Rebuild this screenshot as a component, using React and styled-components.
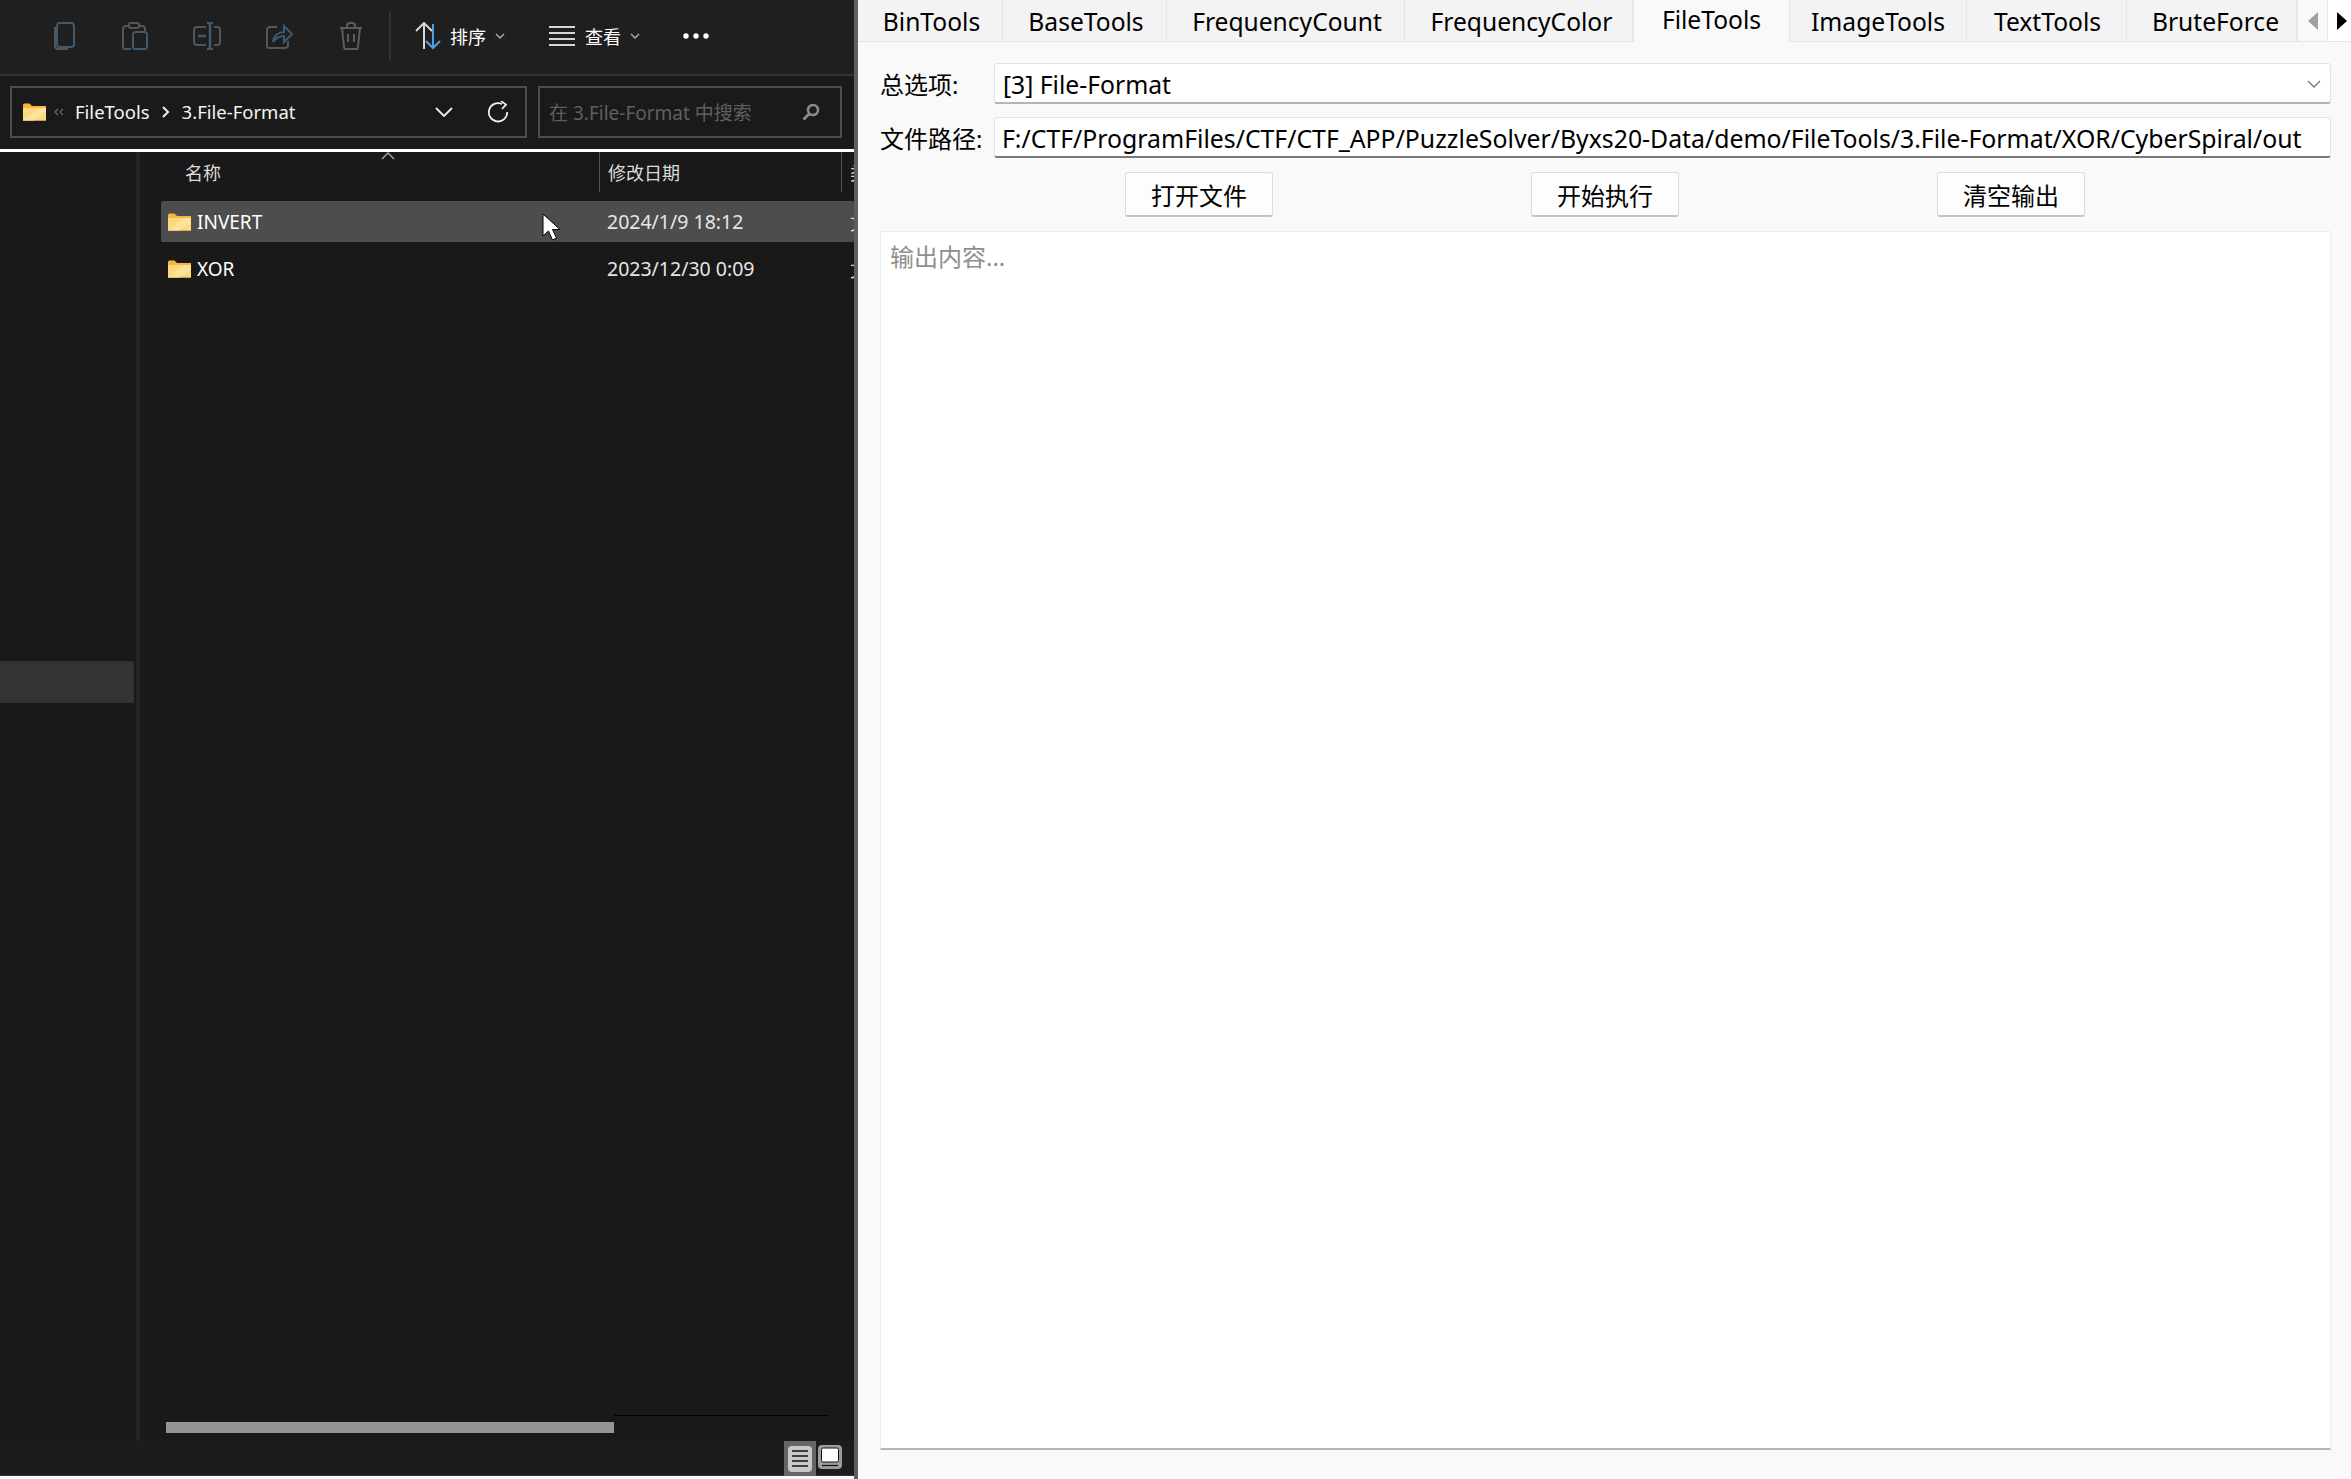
import React from 'react';
import styled, { createGlobalStyle } from 'styled-components';

const GlobalStyle = createGlobalStyle`
  html, body {
    margin: 0;
    padding: 0;
    background: #f9f9f9;
  }
  * {
    box-sizing: border-box;
  }
`;

const FONT = `"Noto Sans", "Noto Sans CJK SC", sans-serif`;

const Screen = styled.div`
  display: flex;
  width: 2351px;
  height: 1479px;
  overflow: hidden;
  font-family: ${FONT};
`;

/* left: file explorer */
const Explorer = styled.section`
  position: relative;
  display: flex;
  flex-direction: column;
  width: 854px;
  height: 1476px;
  background: #191919;
  color: #fff;
`;

const Divider = styled.div`
  width: 4px;
  height: 1479px;
  background: #5f5f5f;
`;

const Toolbar = styled.div`
  display: flex;
  align-items: center;
  height: 76px;
  padding: 0 0 2px 0;
  background: #1f1f1f;
  border-bottom: 2px solid #333;
`;

const ToolIcon = styled.svg`
  width: 28px;
  height: 28px;
  margin-left: ${p => p.$gap}px;
  flex: none;
`;

const ToolSep = styled.div`
  width: 2px;
  height: 48px;
  margin-left: 24px;
  background: #333;
`;

const ToolText = styled.span`
  font-size: 18px;
  margin-left: ${p => p.$gap}px;
  color: #fff;
`;

const AddressRow = styled.div`
  display: flex;
  gap: 11px;
  height: 73px;
  padding: 10px 12px 0 10px;
  background: #1a1a1a;
`;

const AddressBox = styled.div`
  display: flex;
  align-items: center;
  width: 517px;
  height: 52px;
  border: 2px solid #4d4d4d;
  padding-left: 11px;
`;

const SearchBox = styled.div`
  display: flex;
  align-items: center;
  flex: 1;
  height: 52px;
  border: 2px solid #4d4d4d;
  padding-left: 9px;
`;

const Crumb = styled.span`
  font-size: 18.5px;
  margin: -2px 0 0 ${p => p.$gap}px;
  color: #f4f4f4;
`;

const SearchText = styled.span`
  flex: 1;
  font-size: 19px;
  color: #5f5f5f;
`;

const WhiteLine = styled.div`
  height: 3px;
  background: #fff;
`;

const Body = styled.div`
  display: flex;
  flex: 1;
  min-height: 0;
`;

const NavPane = styled.div`
  width: 140px;
  padding-top: 509px;
  border-right: 4px solid #242424;
`;

const NavSelected = styled.div`
  width: 134px;
  height: 42px;
  background: #333;
  border-radius: 0 2px 2px 0;
`;

const FileArea = styled.div`
  position: relative;
  flex: 1;
  display: flex;
  flex-direction: column;
  min-width: 0;
  overflow: hidden;
`;

const HeaderRow = styled.div`
  position: relative;
  display: flex;
  height: 40px;
  margin-bottom: 9px;
  font-size: 18px;
  color: #dcdcdc;
`;

const HeaderCell = styled.div`
  display: flex;
  align-items: center;
  width: ${p => p.$w}px;
  height: 40px;
  padding-left: ${p => p.$pad}px;
  border-right: ${p => (p.$line ? '1px solid #555' : 'none')};
  flex: none;
  white-space: nowrap;
`;

const SortCaret = styled.svg`
  position: absolute;
  left: 241px;
  top: 0;
  width: 14px;
  height: 8px;
`;

const Row = styled.div`
  display: flex;
  align-items: center;
  height: 41px;
  margin: 0 0 6px 21px;
  padding-left: 7px;
  border-radius: 2px;
  background: ${p => (p.$active ? '#4d4d4d' : 'transparent')};
  font-size: 19px;
  color: #fff;
  white-space: nowrap;
`;

const RowName = styled.div`
  width: 416px;
  padding-left: 6px;
  flex: none;
`;

const RowDate = styled.div`
  width: 243px;
  flex: none;
  font-size: 19.5px;
  color: #e6e6e6;
`;

const RowKind = styled.div`
  flex: none;
  font-size: 18px;
  color: #d8d8d8;
`;

const HScroll = styled.div`
  position: absolute;
  left: 26px;
  bottom: 0;
  display: flex;
  height: 26px;
`;

const ScrollThumb = styled.div`
  width: 448px;
  height: 11px;
  margin-top: 7px;
  background: #959595;
`;

const ScrollRest = styled.div`
  width: 214px;
  height: 1px;
  background: #000;
`;

const StatusBar = styled.div`
  display: flex;
  justify-content: flex-end;
  align-items: flex-start;
  height: 35px;
  padding-right: 11px;
  background: #1c1c1c;
  border-bottom: 1px solid #333;
`;

const ViewBtn = styled.div`
  display: flex;
  align-items: center;
  justify-content: center;
  width: ${p => (p.$on ? 32 : 27)}px;
  height: ${p => (p.$on ? 35 : 26)}px;
  margin-top: ${p => (p.$on ? 0 : 3)}px;
  background: ${p => (p.$on ? '#666' : 'transparent')};
`;

const Cursor = styled.svg`
  position: absolute;
  left: 542px;
  top: 213px;
  width: 19px;
  height: 29px;
`;

/* right: PuzzleSolver window */
const Tool = styled.section`
  flex: 1;
  display: flex;
  flex-direction: column;
  min-width: 0;
  background: #f9f9f9;
  color: #000;
`;

const TabBar = styled.div`
  position: relative;
  display: flex;
  height: 42px;
  background: #f3f3f3;
  border-bottom: 1px solid #e5e5e5;
`;

const Tab = styled.div`
  display: flex;
  justify-content: center;
  align-items: center;
  width: ${p => p.$w}px;
  height: ${p => (p.$active ? 42 : 41)}px;
  padding: ${p => (p.$active ? '0 0 4px' : '2px 0 0')};
  padding-left: ${p => p.$nudge || 0}px;
  flex: none;
  font-size: 24.6px;
  background: ${p => (p.$active ? '#f9f9f9' : '#f3f3f3')};
  border-right: 1px solid #e5e5e5;
  border-left: ${p => (p.$active ? '1px solid #e5e5e5' : 'none')};
`;

const TabArrow = styled.div`
  display: flex;
  align-items: center;
  justify-content: center;
  width: ${p => p.$w}px;
  height: 41px;
  flex: none;
  padding-left: ${p => (p.$on ? 4 : 0)}px;
  background: ${p => (p.$on ? '#fff' : '#f9f9f9')};
  border-left: 1px solid #e5e5e5;
  border-radius: 0 0 3px 3px;
`;

const Content = styled.div`
  flex: 1;
  display: flex;
  flex-direction: column;
  padding: 21px 20px 29px 22px;
`;

const FieldRow = styled.div`
  display: flex;
  align-items: center;
  gap: 14px;
  height: 41px;
  margin-bottom: 13px;
`;

const FieldLabel = styled.label`
  width: 100px;
  font-size: 24px;
  white-space: nowrap;
  flex: none;
`;

const ComboBox = styled.div`
  display: flex;
  align-items: center;
  justify-content: space-between;
  flex: 1;
  height: 41px;
  padding: 2px 9px 0 8px;
  background: #fff;
  border: 1px solid #e3e3e3;
  border-bottom: 2px solid #b5b5b5;
  border-radius: 3px;
  font-size: 24.7px;
`;

const PathInput = styled(ComboBox)`
  padding-left: 7px;
  border-bottom-color: #7a7a7a;
  font-size: 24.8px;
  white-space: nowrap;
`;

const ButtonRow = styled.div`
  display: flex;
  justify-content: space-between;
  padding: 1px 246px 0 245px;
  margin-bottom: 14px;
`;

const Button = styled.button`
  width: 148px;
  height: 45px;
  padding: 0;
  font-family: ${FONT};
  font-size: 24px;
  color: #000;
  background: #fdfdfd;
  border: 1px solid #dcdcdc;
  border-bottom: 2px solid #c4c4c4;
  border-radius: 3px;
`;

const Output = styled.div`
  flex: 1;
  padding: 6px 9px;
  background: #fff;
  border: 1px solid #ececec;
  border-bottom: 2px solid #b5b5b5;
  font-size: 24px;
  color: #8e8e8e;
`;

const stroke = { fill: 'none', strokeWidth: 2 };

const Folder = () => (
  <svg width="23" height="18" viewBox="0 0 23 18" style={{ flex: 'none' }}>
    <path d="M0 2a1.5 1.5 0 0 1 1.5-1.5h5L9 3h14v14.5H0z" fill="#f6b73c" />
    <path d="M0 5h23v12.5H0z" fill="#fcd87e" />
    <path d="M0 17L16 5h7v5L11 17.5H0z" fill="#fde29a" />
  </svg>
);

const App = () => (
  <Screen>
    <GlobalStyle />
    <Explorer>
      <Toolbar>
        <ToolIcon $gap={49} viewBox="0 0 28 28" {...stroke}>
          <rect x="8" y="1" width="17" height="24" rx="3" stroke="#3d5a70" />
          <path d="M6 5v19a3 3 0 0 0 3 3h10" stroke="#555" />
        </ToolIcon>
        <ToolIcon $gap={44} viewBox="0 0 28 28" {...stroke}>
          <path d="M8 4H5a3 3 0 0 0-3 3v18a2 2 0 0 0 2 2h6M18 4h4a3 3 0 0 1 2 3v2" stroke="#555" />
          <rect x="8" y="1" width="10" height="5" rx="2" stroke="#555" />
          <rect x="12" y="10" width="14" height="17" rx="2.5" stroke="#3d5a70" />
        </ToolIcon>
        <ToolIcon $gap={44} viewBox="0 0 28 28" {...stroke}>
          <path d="M13 5H4a3 3 0 0 0-3 3v12a3 3 0 0 0 3 3h9M21 5h3a3 3 0 0 1 3 3v12a3 3 0 0 1-3 3h-3" stroke="#555" />
          <path d="M14 1h6M17 1v26M14 27h6M5 14h8" stroke="#3d5a70" strokeWidth="2.5" />
        </ToolIcon>
        <ToolIcon $gap={44} viewBox="0 0 28 28" {...stroke}>
          <path d="M12 5H5a3 3 0 0 0-3 3v16a2 2 0 0 0 2 2h16a3 3 0 0 0 3-3v-4" stroke="#555" />
          <path d="M8 20c1-7 6-10 11-10V4l8 8-8 8v-6c-5 0-8 2-11 6z" stroke="#3d5a70" />
        </ToolIcon>
        <ToolIcon $gap={44} viewBox="0 0 28 28" {...stroke}>
          <path d="M3 6h22M10 6V4a3 3 0 0 1 3-3h2a3 3 0 0 1 3 3v2M5 6l2 19a2 2 0 0 0 2 2h10a2 2 0 0 0 2-2l2-19M11 12v8M17 12v8" stroke="#5c5c5c" />
        </ToolIcon>
        <ToolSep />
        <ToolIcon $gap={23} viewBox="0 0 28 28" {...stroke}>
          <path d="M2 9l8-8 8 8M10 1v26" stroke="#d8d8d8" />
          <path d="M12 19l7 7 7-7M19 26V2" stroke="#4ba0e8" />
        </ToolIcon>
        <ToolText $gap={8}>排序</ToolText>
        <svg width="10" height="7" viewBox="0 0 10 7" style={{ marginLeft: 9 }}>
          <path d="M1 1l4 4 4-4" fill="none" stroke="#aaa" strokeWidth="1.5" />
        </svg>
        <ToolIcon $gap={43} viewBox="0 0 28 28" {...stroke}>
          <path d="M1 5h26M1 11h26M1 17h26M1 23h26" stroke="#d6d6d6" />
        </ToolIcon>
        <ToolText $gap={9}>查看</ToolText>
        <svg width="10" height="7" viewBox="0 0 10 7" style={{ marginLeft: 9 }}>
          <path d="M1 1l4 4 4-4" fill="none" stroke="#aaa" strokeWidth="1.5" />
        </svg>
        <svg width="26" height="6" viewBox="0 0 26 6" style={{ marginLeft: 43 }}>
          <circle cx="3" cy="3" r="2.7" fill="#fff" />
          <circle cx="13" cy="3" r="2.7" fill="#fff" />
          <circle cx="23" cy="3" r="2.7" fill="#fff" />
        </svg>
      </Toolbar>

      <AddressRow>
        <AddressBox>
          <Folder />
          <svg width="10" height="8" viewBox="0 0 10 8" style={{ marginLeft: 8 }}>
            <path d="M4 1L1 4l3 3M9 1L6 4l3 3" fill="none" stroke="#666" strokeWidth="1.3" />
          </svg>
          <Crumb $gap={11}>FileTools</Crumb>
          <svg width="8" height="12" viewBox="0 0 8 12" style={{ marginLeft: 12 }}>
            <path d="M1 1l5 5-5 5" fill="none" stroke="#eee" strokeWidth="2" />
          </svg>
          <Crumb $gap={12}>3.File-Format</Crumb>
          <svg width="18" height="10" viewBox="0 0 18 10" style={{ marginLeft: 140 }}>
            <path d="M1 1l8 8 8-8" fill="none" stroke="#eee" strokeWidth="1.8" />
          </svg>
          <svg width="22" height="22" viewBox="0 0 22 22" style={{ marginLeft: 34 }}>
            <path d="M15 3a9.2 9.2 0 1 0 5.2 8" fill="none" stroke="#eee" strokeWidth="1.8" />
            <path d="M14 0l5 3.6L15 8" fill="none" stroke="#eee" strokeWidth="1.8" />
          </svg>
        </AddressBox>
        <SearchBox>
          <SearchText>在 3.File-Format 中搜索</SearchText>
          <svg width="18" height="18" viewBox="0 0 18 18" style={{ marginRight: 20 }}>
            <circle cx="11" cy="7" r="5" fill="none" stroke="#8a8a8a" strokeWidth="2.6" />
            <path d="M7.5 10.5L1.5 16.5" stroke="#8a8a8a" strokeWidth="3" />
          </svg>
        </SearchBox>
      </AddressRow>

      <WhiteLine />

      <Body>
        <NavPane>
          <NavSelected />
        </NavPane>
        <FileArea>
          <HeaderRow>
            <HeaderCell $w={460} $pad={45} $line>名称</HeaderCell>
            <HeaderCell $w={242} $pad={8} $line>修改日期</HeaderCell>
            <HeaderCell $w={100} $pad={8}>类型</HeaderCell>
            <SortCaret viewBox="0 0 14 8">
              <path d="M1 7l6-6 6 6" fill="none" stroke="#aaa" strokeWidth="1.3" />
            </SortCaret>
          </HeaderRow>
          <Row $active>
            <Folder />
            <RowName>INVERT</RowName>
            <RowDate>2024/1/9 18:12</RowDate>
            <RowKind>文件夹</RowKind>
          </Row>
          <Row>
            <Folder />
            <RowName>XOR</RowName>
            <RowDate>2023/12/30 0:09</RowDate>
            <RowKind>文件夹</RowKind>
          </Row>
          <HScroll>
            <ScrollThumb />
            <ScrollRest />
          </HScroll>
        </FileArea>
      </Body>

      <StatusBar>
        <ViewBtn $on>
          <svg width="24" height="26" viewBox="0 0 24 26">
            <rect width="24" height="26" rx="4" fill="#c8c8c8" />
            <path d="M4 5h16M4 10h16M4 15h16M4 20h16" stroke="#111" strokeWidth="1.5" />
          </svg>
        </ViewBtn>
        <ViewBtn>
          <svg width="24" height="24" viewBox="0 0 24 24">
            <rect width="24" height="24" rx="4" fill="#9c9c9c" />
            <rect x="3.5" y="3" width="17" height="14" rx="1.5" fill="#fff" stroke="#111" />
            <path d="M4 20.5h16" stroke="#111" strokeWidth="1.2" />
          </svg>
        </ViewBtn>
      </StatusBar>

      <Cursor viewBox="0 0 19 29">
        <path d="M1 1v22l5.5-5 4 9 4-2-4-8.5h7.5z" fill="#fff" stroke="#000" strokeWidth="1" />
      </Cursor>
    </Explorer>

    <Divider />

    <Tool>
      <TabBar>
        <Tab $w={145} $nudge={3}>BinTools</Tab>
        <Tab $w={164} $nudge={3}>BaseTools</Tab>
        <Tab $w={238} $nudge={3}>FrequencyCount</Tab>
        <Tab $w={228} $nudge={6}>FrequencyColor</Tab>
        <Tab $w={157} $active>FileTools</Tab>
        <Tab $w={177}>ImageTools</Tab>
        <Tab $w={160} $nudge={2}>TextTools</Tab>
        <Tab $w={170} $nudge={8}>BruteForce</Tab>
        <TabArrow $w={30}>
          <svg width="10" height="18" viewBox="0 0 10 18">
            <path d="M10 0v18L0 9z" fill="#a0a0a0" />
          </svg>
        </TabArrow>
        <TabArrow $w={24} $on>
          <svg width="10" height="18" viewBox="0 0 10 18">
            <path d="M0 0v18l10-9z" fill="#000" />
          </svg>
        </TabArrow>
      </TabBar>
      <Content>
        <FieldRow>
          <FieldLabel>总选项:</FieldLabel>
          <ComboBox>
            [3] File-Format
            <svg width="14" height="9" viewBox="0 0 14 9">
              <path d="M1 1l6 6 6-6" fill="none" stroke="#777" strokeWidth="1.3" />
            </svg>
          </ComboBox>
        </FieldRow>
        <FieldRow>
          <FieldLabel>文件路径:</FieldLabel>
          <PathInput>F:/CTF/ProgramFiles/CTF/CTF_APP/PuzzleSolver/Byxs20-Data/demo/FileTools/3.File-Format/XOR/CyberSpiral/out</PathInput>
        </FieldRow>
        <ButtonRow>
          <Button>打开文件</Button>
          <Button>开始执行</Button>
          <Button>清空输出</Button>
        </ButtonRow>
        <Output>输出内容...</Output>
      </Content>
    </Tool>
  </Screen>
);

export default App;
